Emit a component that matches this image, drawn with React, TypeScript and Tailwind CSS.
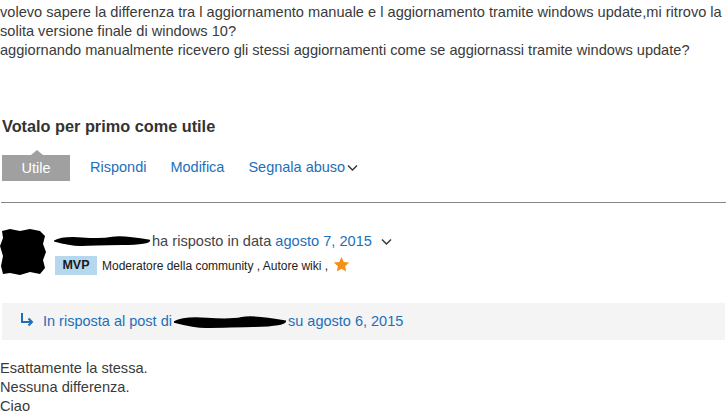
import React from 'react';

const font = { fontFamily: '"Liberation Sans", Arial, sans-serif' };

// Scribbled-over redaction blob
function Redact({ w, h, className = '' }: { w: number; h: number; className?: string }) {
  return (
    <svg width={w} height={h} viewBox={`0 0 ${w} ${h}`} className={className}>
      <path
        d={`M2 ${h * 0.45} Q${w * 0.1} 1 ${w * 0.3} ${h * 0.2} T${w * 0.6} ${h * 0.15} T${w - 2} ${h * 0.4} Q${w} ${h * 0.8} ${w * 0.7} ${h - 2} T${w * 0.3} ${h - 1} T2 ${h * 0.55} Z`}
        fill="#000"
      />
    </svg>
  );
}

function AvatarBlob() {
  return (
    <svg width="46" height="48" viewBox="0 0 46 48">
      <path
        d="M2 3 L10 1 L20 3 L30 1 L40 3 L45 8 L43 16 L46 24 L43 32 L45 40 L40 46 L30 44 L20 47 L10 45 L3 46 L1 38 L3 28 L0 18 L3 10 Z"
        fill="#000"
      />
    </svg>
  );
}

function Chevron() {
  return (
    <svg width="11" height="8" viewBox="0 0 11 8" className="inline-block">
      <path d="M1 1.5l4.5 4.5 4.5-4.5" fill="none" stroke="#333" strokeWidth="1.4" />
    </svg>
  );
}

export default function App() {
  return (
    <div className="w-[727px] h-[416px] bg-white overflow-hidden text-[#333] pt-[3px]" style={font}>
      <div className="text-[14.6px] leading-[19px] text-[#3a3a3a]">
        <p className="whitespace-nowrap">volevo sapere la differenza tra l aggiornamento manuale e l aggiornamento tramite windows update,mi ritrovo la</p>
        <p className="whitespace-nowrap">solita versione finale di windows 10?</p>
        <p className="whitespace-nowrap">aggiornando manualmente ricevero gli stessi aggiornamenti come se aggiornassi tramite windows update?</p>
      </div>

      <h3 className="mt-[56px] text-[16.3px] leading-[20px] font-bold text-[#333] pl-[2px]">Votalo per primo come utile</h3>

      <div className="mt-[19px] flex items-center text-[14.5px] pl-[2px]">
        <div className="relative">
          <span className="absolute left-[29px] -top-[5px] w-0 h-0 border-x-[6px] border-x-transparent border-b-[5px] border-b-[#a0a0a0]" />
          <button className="w-[68px] h-[26px] bg-[#a0a0a0] text-white pt-[2px]">Utile</button>
        </div>
        <a className="ml-[20px] text-[#1d6fb8]">Rispondi</a>
        <a className="ml-[24px] text-[#1d6fb8]">Modifica</a>
        <a className="ml-[24px] text-[#1d6fb8] flex items-center gap-[2px]">
          Segnala abuso
          <Chevron />
        </a>
      </div>

      <div className="mt-[21px] mx-[1px] border-t-[1px] border-[#888]" />

      <div className="mt-[25px] flex">
        <AvatarBlob />
        <div className="ml-[6px] pt-[4px]">
          <div className="flex items-center text-[14.6px] leading-[18px]">
            <Redact w={100} h={12} />
            <span className="text-[#444]">ha risposto in data&nbsp;</span>
            <a className="text-[#1d6fb8]">agosto 7, 2015</a>
            <span className="ml-[9px]">
              <Chevron />
            </span>
          </div>
          <div className="mt-[6px] flex items-center text-[12px]">
            <span className="ml-[3px] w-[42px] h-[19px] bg-[#b6d8ef] text-[#1a1a1a] font-bold flex items-center justify-center text-[12.5px]">MVP</span>
            <span className="ml-[5px] text-[#222]">Moderatore della community , Autore wiki ,</span>
            <svg width="17" height="17" viewBox="0 0 24 24" className="ml-[5px] -mt-[2px]">
              <path d="M12 1.5l3.2 7 7.6.8-5.7 5.1 1.6 7.6L12 18.1l-6.7 3.9 1.6-7.6L1.2 9.3l7.6-.8z" fill="#f39019" />
            </svg>
          </div>
        </div>
      </div>

      <div className="mt-[27px] mx-[2px] h-[37px] bg-[#f4f4f4] flex items-center pl-[17px] text-[14.5px] text-[#1d6fb8]">
        <svg width="16" height="16" viewBox="0 0 16 16" className="mr-[8px] -mt-[4px]">
          <path d="M3 1v9h10M9.5 6.5L13 10l-3.5 3.5" fill="none" stroke="#1d6fb8" strokeWidth="2" />
        </svg>
        <span>In risposta al post di</span>
        <Redact w={116} h={14} />
        <span>su agosto 6, 2015</span>
      </div>

      <div className="mt-[19px] text-[14.6px] leading-[19px] text-[#3a3a3a]">
        <p>Esattamente la stessa.</p>
        <p>Nessuna differenza.</p>
        <p>Ciao</p>
      </div>
    </div>
  );
}
